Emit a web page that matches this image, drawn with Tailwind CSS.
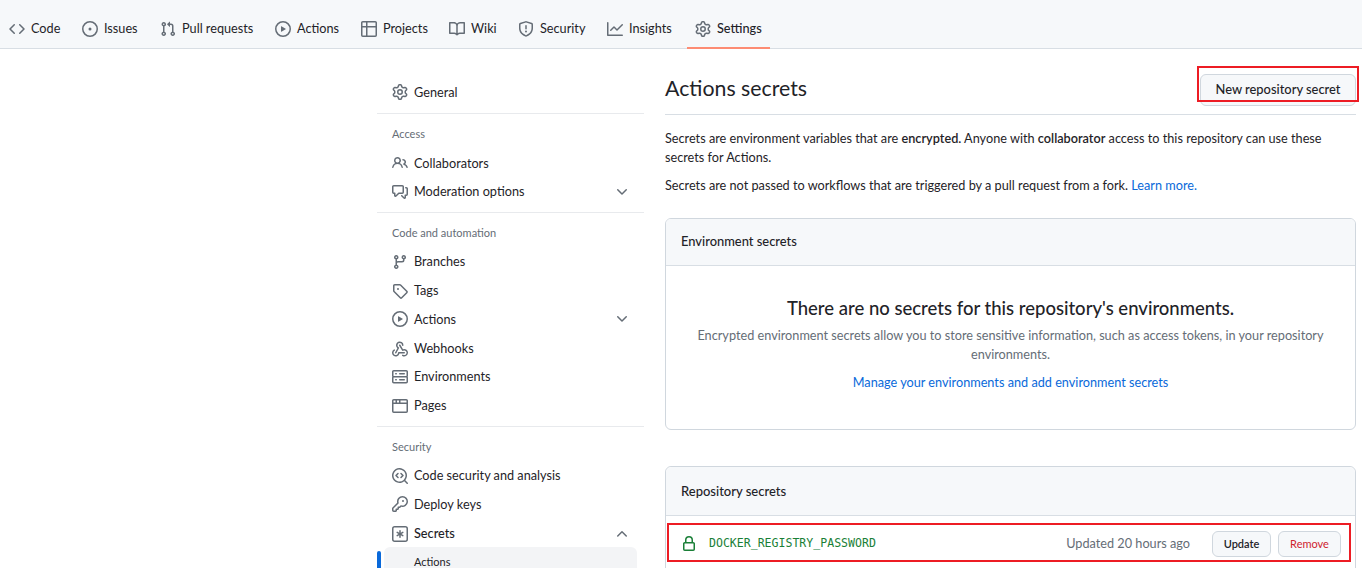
<!DOCTYPE html>
<html lang="en">
<head>
<meta charset="utf-8">
<title>Actions secrets</title>
<script src="https://cdn.jsdelivr.net/npm/@tailwindcss/browser@4"></script>
</head>
<body class="bg-white">
<div class="w-[1362px] h-[568px] overflow-hidden font-['Lato',sans-serif] text-[12.7px] text-[#1f2328]">
  <nav class="h-[49px] bg-[#f6f8fa] border-b border-[#d8dee4] flex pl-[1px] text-[12.7px]">
    <a class="w-[73px] h-[49px] flex items-center gap-[6px] pl-[8px] pt-[8px]"><svg class="w-4 h-4 fill-[#656d76] shrink-0" viewBox="0 0 16 16"><path d="m11.28 3.22 4.25 4.25a.75.75 0 0 1 0 1.06l-4.25 4.25a.749.749 0 0 1-1.275-.326.749.749 0 0 1 .215-.734L13.94 8l-3.72-3.72a.749.749 0 0 1 .326-1.275.749.749 0 0 1 .734.215Zm-6.56 0a.751.751 0 0 1 1.042.018.751.751 0 0 1 .018 1.042L2.06 8l3.72 3.72a.749.749 0 0 1-.326 1.275.749.749 0 0 1-.734-.215L.47 8.53a.75.75 0 0 1 0-1.06Z"/></svg>Code</a>
    <a class="w-[78px] h-[49px] flex items-center gap-[6px] pl-[8px] pt-[8px]"><svg class="w-4 h-4 fill-[#656d76] shrink-0" viewBox="0 0 16 16"><path d="M8 9.5a1.5 1.5 0 1 0 0-3 1.5 1.5 0 0 0 0 3Z"/><path d="M8 0a8 8 0 1 1 0 16A8 8 0 0 1 8 0ZM1.5 8a6.5 6.5 0 1 0 13 0 6.5 6.5 0 0 0-13 0Z"/></svg>Issues</a>
    <a class="w-[115px] h-[49px] flex items-center gap-[6px] pl-[8px] pt-[8px]"><svg class="w-4 h-4 fill-[#656d76] shrink-0" viewBox="0 0 16 16"><path d="M1.5 3.25a2.25 2.25 0 1 1 3 2.122v5.256a2.251 2.251 0 1 1-1.5 0V5.372A2.25 2.25 0 0 1 1.5 3.25Zm5.677-.177L9.573.677A.25.25 0 0 1 10 .854V2.5h1A2.5 2.5 0 0 1 13.5 5v5.628a2.251 2.251 0 1 1-1.5 0V5a1 1 0 0 0-1-1h-1v1.646a.25.25 0 0 1-.427.177L7.177 3.427a.25.25 0 0 1 0-.354ZM3.75 2.5a.75.75 0 1 0 0 1.5.75.75 0 0 0 0-1.5Zm0 9.5a.75.75 0 1 0 0 1.5.75.75 0 0 0 0-1.5Zm8.25.75a.75.75 0 1 0 1.5 0 .75.75 0 0 0-1.5 0Z"/></svg>Pull requests</a>
    <a class="w-[86px] h-[49px] flex items-center gap-[6px] pl-[8px] pt-[8px]"><svg class="w-4 h-4 fill-[#656d76] shrink-0" viewBox="0 0 16 16"><path d="M8 0a8 8 0 1 1 0 16A8 8 0 0 1 8 0ZM1.5 8a6.5 6.5 0 1 0 13 0 6.5 6.5 0 0 0-13 0Zm4.879-2.773 4.264 2.559a.25.25 0 0 1 0 .428l-4.264 2.559A.25.25 0 0 1 6 10.559V5.442a.25.25 0 0 1 .379-.215Z"/></svg>Actions</a>
    <a class="w-[88px] h-[49px] flex items-center gap-[6px] pl-[8px] pt-[8px]"><svg class="w-4 h-4 fill-[#656d76] shrink-0" viewBox="0 0 16 16"><path d="M0 1.75C0 .784.784 0 1.75 0h12.5C15.216 0 16 .784 16 1.75v12.5A1.75 1.75 0 0 1 14.25 16H1.75A1.75 1.75 0 0 1 0 14.25ZM6.5 6.5v8h7.75a.25.25 0 0 0 .25-.25V6.5Zm8-1.5V1.75a.25.25 0 0 0-.25-.25H6.5V5Zm-13 1.5v7.75c0 .138.112.25.25.25H5v-8ZM5 5V1.5H1.75a.25.25 0 0 0-.25.25V5Z"/></svg>Projects</a>
    <a class="w-[69px] h-[49px] flex items-center gap-[6px] pl-[8px] pt-[8px]"><svg class="w-4 h-4 fill-[#656d76] shrink-0" viewBox="0 0 16 16"><path d="M0 1.75A.75.75 0 0 1 .75 1h4.253c1.227 0 2.317.59 3 1.501A3.743 3.743 0 0 1 11.006 1h4.245a.75.75 0 0 1 .75.75v10.5a.75.75 0 0 1-.75.75h-4.507a2.25 2.25 0 0 0-1.591.659l-.622.621a.75.75 0 0 1-1.06 0l-.622-.621A2.25 2.25 0 0 0 5.258 13H.75a.75.75 0 0 1-.75-.75Zm7.251 10.324.004-5.073-.002-2.253A2.25 2.25 0 0 0 5.003 2.5H1.5v9h3.757a3.75 3.75 0 0 1 1.994.574ZM8.755 4.75l-.004 7.322a3.752 3.752 0 0 1 1.992-.572H14.5v-9h-3.495a2.25 2.25 0 0 0-2.25 2.25Z"/></svg>Wiki</a>
    <a class="w-[89px] h-[49px] flex items-center gap-[6px] pl-[8px] pt-[8px]"><svg class="w-4 h-4 fill-[#656d76] shrink-0" viewBox="0 0 16 16"><path d="M7.467.133a1.748 1.748 0 0 1 1.066 0l5.25 1.68A1.75 1.75 0 0 1 15 3.48V7c0 1.566-.32 3.182-1.303 4.682-.983 1.498-2.585 2.813-5.032 3.855a1.697 1.697 0 0 1-1.33 0c-2.447-1.042-4.049-2.357-5.032-3.855C1.32 10.182 1 8.566 1 7V3.48a1.75 1.75 0 0 1 1.217-1.667Zm.61 1.429a.25.25 0 0 0-.153 0l-5.25 1.68a.25.25 0 0 0-.174.238V7c0 1.358.275 2.666 1.057 3.86.784 1.194 2.121 2.34 4.366 3.297a.196.196 0 0 0 .154 0c2.245-.956 3.582-2.104 4.366-3.298C13.225 9.666 13.5 8.36 13.5 7V3.48a.251.251 0 0 0-.174-.237l-5.25-1.68ZM8.75 4.75v3a.75.75 0 0 1-1.5 0v-3a.75.75 0 0 1 1.5 0ZM9 10.5a1 1 0 1 1-2 0 1 1 0 0 1 2 0Z"/></svg>Security</a>
    <a class="w-[88px] h-[49px] flex items-center gap-[6px] pl-[8px] pt-[8px]"><svg class="w-4 h-4 fill-[#656d76] shrink-0" viewBox="0 0 16 16"><path d="M1.5 1.75V13.5h13.75a.75.75 0 0 1 0 1.5H.75a.75.75 0 0 1-.75-.75V1.75a.75.75 0 0 1 1.5 0Zm14.28 2.53-5.25 5.25a.75.75 0 0 1-1.06 0L7 7.06 4.28 9.78a.751.751 0 0 1-1.042-.018.751.751 0 0 1-.018-1.042l3.25-3.25a.75.75 0 0 1 1.06 0L10 7.94l4.72-4.72a.751.751 0 0 1 1.042.018.751.751 0 0 1 .018 1.042Z"/></svg>Insights</a>
    <a class="w-[83px] h-[49px] flex items-center gap-[6px] pl-[8px] pt-[10px] font-medium border-b-2 border-[#fd8c73]"><svg class="w-4 h-4 fill-[#656d76] shrink-0" viewBox="0 0 16 16"><path d="M8 0a8.2 8.2 0 0 1 .701.031C9.444.095 9.99.645 10.16 1.29l.288 1.107c.018.066.079.158.212.224.231.114.454.243.668.386.123.082.233.09.299.071l1.103-.303c.644-.176 1.392.021 1.82.63.27.385.506.792.704 1.218.315.675.111 1.422-.364 1.891l-.814.806c-.049.048-.098.147-.088.294.016.257.016.515 0 .772-.01.147.038.246.088.294l.814.806c.475.469.679 1.216.364 1.891a7.977 7.977 0 0 1-.704 1.217c-.428.61-1.176.807-1.82.63l-1.102-.302c-.067-.019-.177-.011-.3.071a5.909 5.909 0 0 1-.668.386c-.133.066-.194.158-.211.224l-.29 1.106c-.168.646-.715 1.196-1.458 1.26a8.006 8.006 0 0 1-1.402 0c-.743-.064-1.289-.614-1.458-1.26l-.289-1.106c-.018-.066-.079-.158-.212-.224a5.738 5.738 0 0 1-.668-.386c-.123-.082-.233-.09-.299-.071l-1.103.303c-.644.176-1.392-.021-1.82-.63a8.12 8.12 0 0 1-.704-1.218c-.315-.675-.111-1.422.363-1.891l.815-.806c.05-.048.098-.147.088-.294a6.214 6.214 0 0 1 0-.772c.01-.147-.038-.246-.088-.294l-.815-.806C.635 6.045.431 5.298.746 4.623a7.92 7.92 0 0 1 .704-1.217c.428-.61 1.176-.807 1.82-.63l1.102.302c.067.019.177.011.3-.071.214-.143.437-.272.668-.386.133-.066.194-.158.211-.224l.29-1.106C6.009.645 6.556.095 7.299.03 7.53.01 7.764 0 8 0Zm-.571 1.525c-.036.003-.108.036-.137.146l-.289 1.105c-.147.561-.549.967-.998 1.189-.173.086-.34.183-.5.29-.417.278-.97.423-1.529.27l-1.103-.303c-.109-.03-.175.016-.195.045-.22.312-.412.644-.573.99-.014.031-.021.11.059.19l.815.806c.411.406.562.957.53 1.456a4.709 4.709 0 0 0 0 .582c.032.499-.119 1.05-.53 1.456l-.815.806c-.081.08-.073.159-.059.19.162.346.353.677.573.989.02.03.085.076.195.046l1.102-.303c.56-.153 1.113-.008 1.53.27.161.107.328.204.501.29.447.222.85.629.997 1.189l.289 1.105c.029.109.101.143.137.146a6.6 6.6 0 0 0 1.142 0c.036-.003.108-.036.137-.146l.289-1.105c.147-.561.549-.967.998-1.189.173-.086.34-.183.5-.29.417-.278.97-.423 1.529-.27l1.103.303c.109.029.175-.016.195-.045.22-.313.411-.644.573-.99.014-.031.021-.11-.059-.19l-.815-.806c-.411-.406-.562-.957-.53-1.456a4.709 4.709 0 0 0 0-.582c-.032-.499.119-1.05.53-1.456l.815-.806c.081-.08.073-.159.059-.19a6.464 6.464 0 0 0-.573-.989c-.02-.03-.085-.076-.195-.046l-1.102.303c-.56.153-1.113.008-1.53-.27a4.44 4.44 0 0 0-.501-.29c-.447-.222-.85-.629-.997-1.189l-.289-1.105c-.029-.11-.101-.143-.137-.146a6.6 6.6 0 0 0-1.142 0ZM11 8a3 3 0 1 1-6 0 3 3 0 0 1 6 0ZM9.5 8a1.5 1.5 0 1 0-3.001.001A1.5 1.5 0 0 0 9.5 8Z"/></svg>Settings</a>
  </nav>

  <div class="flex pl-[377px]">
    <aside class="w-[267px] shrink-0 pt-[29px] text-[12.7px]">
      <a class="h-[28.8px] flex items-center gap-[6px] pl-[15px]"><svg class="w-4 h-4 fill-[#656d76] shrink-0" viewBox="0 0 16 16"><path d="M8 0a8.2 8.2 0 0 1 .701.031C9.444.095 9.99.645 10.16 1.29l.288 1.107c.018.066.079.158.212.224.231.114.454.243.668.386.123.082.233.09.299.071l1.103-.303c.644-.176 1.392.021 1.82.63.27.385.506.792.704 1.218.315.675.111 1.422-.364 1.891l-.814.806c-.049.048-.098.147-.088.294.016.257.016.515 0 .772-.01.147.038.246.088.294l.814.806c.475.469.679 1.216.364 1.891a7.977 7.977 0 0 1-.704 1.217c-.428.61-1.176.807-1.82.63l-1.102-.302c-.067-.019-.177-.011-.3.071a5.909 5.909 0 0 1-.668.386c-.133.066-.194.158-.211.224l-.29 1.106c-.168.646-.715 1.196-1.458 1.26a8.006 8.006 0 0 1-1.402 0c-.743-.064-1.289-.614-1.458-1.26l-.289-1.106c-.018-.066-.079-.158-.212-.224a5.738 5.738 0 0 1-.668-.386c-.123-.082-.233-.09-.299-.071l-1.103.303c-.644.176-1.392-.021-1.82-.63a8.12 8.12 0 0 1-.704-1.218c-.315-.675-.111-1.422.363-1.891l.815-.806c.05-.048.098-.147.088-.294a6.214 6.214 0 0 1 0-.772c.01-.147-.038-.246-.088-.294l-.815-.806C.635 6.045.431 5.298.746 4.623a7.92 7.92 0 0 1 .704-1.217c.428-.61 1.176-.807 1.82-.63l1.102.302c.067.019.177.011.3-.071.214-.143.437-.272.668-.386.133-.066.194-.158.211-.224l.29-1.106C6.009.645 6.556.095 7.299.03 7.53.01 7.764 0 8 0Zm-.571 1.525c-.036.003-.108.036-.137.146l-.289 1.105c-.147.561-.549.967-.998 1.189-.173.086-.34.183-.5.29-.417.278-.97.423-1.529.27l-1.103-.303c-.109-.03-.175.016-.195.045-.22.312-.412.644-.573.99-.014.031-.021.11.059.19l.815.806c.411.406.562.957.53 1.456a4.709 4.709 0 0 0 0 .582c.032.499-.119 1.05-.53 1.456l-.815.806c-.081.08-.073.159-.059.19.162.346.353.677.573.989.02.03.085.076.195.046l1.102-.303c.56-.153 1.113-.008 1.53.27.161.107.328.204.501.29.447.222.85.629.997 1.189l.289 1.105c.029.109.101.143.137.146a6.6 6.6 0 0 0 1.142 0c.036-.003.108-.036.137-.146l.289-1.105c.147-.561.549-.967.998-1.189.173-.086.34-.183.5-.29.417-.278.97-.423 1.529-.27l1.103.303c.109.029.175-.016.195-.045.22-.313.411-.644.573-.99.014-.031.021-.11-.059-.19l-.815-.806c-.411-.406-.562-.957-.53-1.456a4.709 4.709 0 0 0 0-.582c-.032-.499.119-1.05.53-1.456l.815-.806c.081-.08.073-.159.059-.19a6.464 6.464 0 0 0-.573-.989c-.02-.03-.085-.076-.195-.046l-1.102.303c-.56.153-1.113.008-1.53-.27a4.44 4.44 0 0 0-.501-.29c-.447-.222-.85-.629-.997-1.189l-.289-1.105c-.029-.11-.101-.143-.137-.146a6.6 6.6 0 0 0-1.142 0ZM11 8a3 3 0 1 1-6 0 3 3 0 0 1 6 0ZM9.5 8a1.5 1.5 0 1 0-3.001.001A1.5 1.5 0 0 0 9.5 8Z"/></svg>General</a>
      <div class="border-t border-[#e8eaed] mt-[6px]"></div>
      <div class="h-[14px] mt-[13px] mb-[8px] pl-[15px] text-[11px] leading-[14px] text-[#656d76]">Access</div>
      <a class="h-[28.8px] flex items-center gap-[6px] pl-[15px]"><svg class="w-4 h-4 fill-[#656d76] shrink-0" viewBox="0 0 16 16"><path d="M2 5.5a3.5 3.5 0 1 1 5.898 2.549 5.508 5.508 0 0 1 3.034 4.084.75.75 0 1 1-1.482.235 4 4 0 0 0-7.9 0 .75.75 0 0 1-1.482-.236A5.507 5.507 0 0 1 3.102 8.05 3.493 3.493 0 0 1 2 5.5ZM11 4a3.001 3.001 0 0 1 2.22 5.018 5.01 5.01 0 0 1 2.56 3.012.749.749 0 0 1-.885.954.752.752 0 0 1-.549-.514 3.507 3.507 0 0 0-2.522-2.372.75.75 0 0 1-.574-.73v-.352a.75.75 0 0 1 .416-.672A1.5 1.5 0 0 0 11 5.5.75.75 0 0 1 11 4Zm-5.5-.5a2 2 0 1 0-.001 3.999A2 2 0 0 0 5.5 3.5Z"/></svg>Collaborators</a>
      <a class="h-[28.8px] flex items-center gap-[6px] pl-[15px] pr-[14px]"><svg class="w-4 h-4 fill-[#656d76] shrink-0" viewBox="0 0 16 16"><path d="M1.75 1h8.5c.966 0 1.75.784 1.75 1.75v5.5A1.75 1.75 0 0 1 10.25 10H7.061l-2.574 2.573A1.458 1.458 0 0 1 2 11.543V10h-.25A1.75 1.75 0 0 1 0 8.25v-5.5C0 1.784.784 1 1.75 1ZM1.5 2.75v5.5c0 .138.112.25.25.25h1a.75.75 0 0 1 .75.75v2.19l2.72-2.72a.749.749 0 0 1 .53-.22h3.5a.25.25 0 0 0 .25-.25v-5.5a.25.25 0 0 0-.25-.25h-8.5a.25.25 0 0 0-.25.25Zm13 2a.25.25 0 0 0-.25-.25h-.5a.75.75 0 0 1 0-1.5h.5c.966 0 1.75.784 1.75 1.75v5.5A1.75 1.75 0 0 1 14.25 12H14v1.543a1.458 1.458 0 0 1-2.487 1.03L9.22 12.28a.749.749 0 0 1 .326-1.275.749.749 0 0 1 .734.215l2.22 2.22v-2.19a.75.75 0 0 1 .75-.75h1a.25.25 0 0 0 .25-.25Z"/></svg>Moderation options<svg class="w-4 h-4 fill-[#656d76] shrink-0 ml-auto" viewBox="0 0 16 16"><path d="M12.78 5.22a.749.749 0 0 1 0 1.06l-4.25 4.25a.749.749 0 0 1-1.06 0L3.22 6.28a.749.749 0 1 1 1.06-1.06L8 8.939l3.72-3.719a.749.749 0 0 1 1.06 0Z"/></svg></a>
      <div class="border-t border-[#e8eaed] mt-[6px]"></div>
      <div class="h-[14px] mt-[13px] mb-[7px] pl-[15px] text-[11px] leading-[14px] text-[#656d76]">Code and automation</div>
      <a class="h-[28.8px] flex items-center gap-[6px] pl-[15px]"><svg class="w-4 h-4 fill-[#656d76] shrink-0" viewBox="0 0 16 16"><path d="M9.5 3.25a2.25 2.25 0 1 1 3 2.122V6A2.5 2.5 0 0 1 10 8.5H6a1 1 0 0 0-1 1v1.128a2.251 2.251 0 1 1-1.5 0V5.372a2.25 2.25 0 1 1 1.5 0v1.836A2.493 2.493 0 0 1 6 7h4a1 1 0 0 0 1-1v-.628A2.25 2.25 0 0 1 9.5 3.25Zm-6 0a.75.75 0 1 0 1.5 0 .75.75 0 0 0-1.5 0Zm8.25-.75a.75.75 0 1 0 0 1.5.75.75 0 0 0 0-1.5ZM4.25 12a.75.75 0 1 0 0 1.5.75.75 0 0 0 0-1.5Z"/></svg>Branches</a>
      <a class="h-[28.8px] flex items-center gap-[6px] pl-[15px]"><svg class="w-4 h-4 fill-[#656d76] shrink-0" viewBox="0 0 16 16"><path d="M1 7.775V2.75C1 1.784 1.784 1 2.75 1h5.025c.464 0 .91.184 1.238.513l6.25 6.25a1.75 1.75 0 0 1 0 2.474l-5.026 5.026a1.75 1.75 0 0 1-2.474 0l-6.25-6.25A1.75 1.75 0 0 1 1 7.775Zm1.5 0c0 .066.026.13.073.177l6.25 6.25a.25.25 0 0 0 .354 0l5.025-5.025a.25.25 0 0 0 0-.354l-6.25-6.25a.25.25 0 0 0-.177-.073H2.75a.25.25 0 0 0-.25.25ZM6 5a1 1 0 1 1 0 2 1 1 0 0 1 0-2Z"/></svg>Tags</a>
      <a class="h-[28.8px] flex items-center gap-[6px] pl-[15px] pr-[14px]"><svg class="w-4 h-4 fill-[#656d76] shrink-0" viewBox="0 0 16 16"><path d="M8 0a8 8 0 1 1 0 16A8 8 0 0 1 8 0ZM1.5 8a6.5 6.5 0 1 0 13 0 6.5 6.5 0 0 0-13 0Zm4.879-2.773 4.264 2.559a.25.25 0 0 1 0 .428l-4.264 2.559A.25.25 0 0 1 6 10.559V5.442a.25.25 0 0 1 .379-.215Z"/></svg>Actions<svg class="w-4 h-4 fill-[#656d76] shrink-0 ml-auto" viewBox="0 0 16 16"><path d="M12.78 5.22a.749.749 0 0 1 0 1.06l-4.25 4.25a.749.749 0 0 1-1.06 0L3.22 6.28a.749.749 0 1 1 1.06-1.06L8 8.939l3.72-3.719a.749.749 0 0 1 1.06 0Z"/></svg></a>
      <a class="h-[28.8px] flex items-center gap-[6px] pl-[15px] pt-[1px]"><svg class="w-4 h-4 fill-[#656d76] shrink-0" viewBox="0 0 16 16"><path d="M5.5 4.25a2.25 2.25 0 0 1 4.5 0 .75.75 0 0 0 1.5 0 3.75 3.75 0 1 0-6.14 2.889l-2.272 4.258a.75.75 0 0 0 1.324.706L7 7.25a.75.75 0 0 0-.309-1.015A2.25 2.25 0 0 1 5.5 4.25Z"/><path d="M7.364 3.607a.75.75 0 0 1 1.03.257l2.608 4.349a3.75 3.75 0 1 1-.628 6.785.75.75 0 0 1 .752-1.299 2.25 2.25 0 1 0-.033-3.88.75.75 0 0 1-1.03-.256L7.107 4.636a.75.75 0 0 1 .257-1.03Z"/><path d="M2.9 8.776A.75.75 0 0 1 2.625 9.8 2.25 2.25 0 1 0 6 11.75a.75.75 0 0 1 .75-.751h5.5a.75.75 0 0 1 0 1.5H7.425a3.751 3.751 0 1 1-5.55-3.998.75.75 0 0 1 1.024.274Z"/></svg>Webhooks</a>
      <a class="h-[28.8px] flex items-center gap-[6px] pl-[15px]"><svg class="w-4 h-4 fill-[#656d76] shrink-0" viewBox="0 0 16 16"><path d="M1.75 1h12.5c.966 0 1.75.784 1.75 1.75v4c0 .372-.116.717-.314 1 .198.283.314.628.314 1v4a1.75 1.75 0 0 1-1.75 1.75H1.75A1.75 1.75 0 0 1 0 12.75v-4c0-.358.109-.707.314-1a1.739 1.739 0 0 1-.314-1v-4C0 1.784.784 1 1.75 1ZM1.5 2.75v4c0 .138.112.25.25.25h12.5a.25.25 0 0 0 .25-.25v-4a.25.25 0 0 0-.25-.25H1.75a.25.25 0 0 0-.25.25Zm.25 5.75a.25.25 0 0 0-.25.25v4c0 .138.112.25.25.25h12.5a.25.25 0 0 0 .25-.25v-4a.25.25 0 0 0-.25-.25ZM7 4.75A.75.75 0 0 1 7.75 4h4.5a.75.75 0 0 1 0 1.5h-4.5A.75.75 0 0 1 7 4.75Zm.75 5.25h4.5a.75.75 0 0 1 0 1.5h-4.5a.75.75 0 0 1 0-1.5ZM3 4.75A.75.75 0 0 1 3.75 4h.5a.75.75 0 0 1 0 1.5h-.5A.75.75 0 0 1 3 4.75ZM3.75 10h.5a.75.75 0 0 1 0 1.5h-.5a.75.75 0 0 1 0-1.5Z"/></svg>Environments</a>
      <a class="h-[28.8px] flex items-center gap-[6px] pl-[15px]"><svg class="w-4 h-4 fill-[#656d76] shrink-0" viewBox="0 0 16 16"><path d="M0 2.75C0 1.784.784 1 1.75 1h12.5c.966 0 1.75.784 1.75 1.75v10.5A1.75 1.75 0 0 1 14.25 15H1.75A1.75 1.75 0 0 1 0 13.25ZM14.5 6h-13v7.25c0 .138.112.25.25.25h12.5a.25.25 0 0 0 .25-.25Zm-6-3.5v2h6V2.75a.25.25 0 0 0-.25-.25ZM5 2.5v2h2v-2Zm-3.25 0a.25.25 0 0 0-.25.25V4.5h2v-2Z"/></svg>Pages</a>
      <div class="border-t border-[#e8eaed] mt-[6px]"></div>
      <div class="h-[14px] mt-[13px] mb-[7px] pl-[15px] text-[11px] leading-[14px] text-[#656d76]">Security</div>
      <a class="h-[28.8px] flex items-center gap-[6px] pl-[15px]"><svg class="w-4 h-4 fill-[#656d76] shrink-0" viewBox="0 0 16 16"><path d="M8.47 4.97a.75.75 0 0 0 0 1.06L9.94 7.5 8.47 8.97a.75.75 0 1 0 1.06 1.06l2-2a.75.75 0 0 0 0-1.06l-2-2a.75.75 0 0 0-1.06 0ZM6.53 6.03a.75.75 0 0 0-1.06-1.06l-2 2a.75.75 0 0 0 0 1.06l2 2a.75.75 0 1 0 1.06-1.06L5.06 7.5l1.47-1.47Z"/><path d="M12.246 13.307a7.501 7.501 0 1 1 1.06-1.06l2.474 2.473a.749.749 0 0 1-.326 1.275.749.749 0 0 1-.734-.215ZM1.5 7.5a6.002 6.002 0 0 0 3.608 5.504 6.002 6.002 0 0 0 6.486-1.117.748.748 0 0 1 .292-.293A6 6 0 1 0 1.5 7.5Z"/></svg>Code security and analysis</a>
      <a class="h-[28.8px] flex items-center gap-[6px] pl-[15px]"><svg class="w-4 h-4 fill-[#656d76] shrink-0" viewBox="0 0 16 16"><path d="M10.5 0a5.499 5.499 0 1 1-1.288 10.848l-.932.932a.749.749 0 0 1-.53.22H7v.75a.749.749 0 0 1-.22.53l-.5.5a.749.749 0 0 1-.53.22H5v.75a.749.749 0 0 1-.22.53l-.5.5a.749.749 0 0 1-.53.22h-2A1.75 1.75 0 0 1 0 14.25v-2c0-.199.079-.389.22-.53l4.932-4.932A5.5 5.5 0 0 1 10.5 0Zm-4 5.5c-.001.431.069.86.205 1.269a.75.75 0 0 1-.181.768L1.5 12.56v1.69c0 .138.112.25.25.25h1.69l.06-.06v-1.19a.75.75 0 0 1 .75-.75h1.19l.06-.06v-1.19a.75.75 0 0 1 .75-.75h1.19l1.023-1.025a.75.75 0 0 1 .768-.18A4 4 0 1 0 6.5 5.5ZM11 6a1 1 0 1 1 0-2 1 1 0 0 1 0 2Z"/></svg>Deploy keys</a>
      <a class="h-[28.8px] flex items-center gap-[6px] pl-[15px] pr-[14px] pt-[1px] font-medium"><svg class="w-4 h-4 fill-[#656d76] shrink-0" viewBox="0 0 16 16"><path d="M0 2.75A2.75 2.75 0 0 1 2.75 0h10.5A2.75 2.75 0 0 1 16 2.75v10.5A2.75 2.75 0 0 1 13.25 16H2.75A2.75 2.75 0 0 1 0 13.25ZM2.75 1.5c-.69 0-1.25.56-1.25 1.25v10.5c0 .69.56 1.25 1.25 1.25h10.5c.69 0 1.25-.56 1.25-1.25V2.75c0-.69-.56-1.25-1.25-1.25Z"/><path d="M8 4a.75.75 0 0 1 .75.75V6.7l1.69-.975a.75.75 0 0 1 .75 1.3L9.5 8l1.69.976a.75.75 0 0 1-.75 1.298L8.75 9.3v1.951a.75.75 0 0 1-1.5 0V9.299l-1.69.976a.75.75 0 0 1-.75-1.3L6.5 8l-1.69-.975a.75.75 0 0 1 .75-1.3l1.69.976V4.75A.75.75 0 0 1 8 4Z"/></svg>Secrets<svg class="w-4 h-4 fill-[#656d76] shrink-0 ml-auto" viewBox="0 0 16 16"><path d="M3.22 10.53a.749.749 0 0 1 0-1.06l4.25-4.25a.749.749 0 0 1 1.06 0l4.25 4.25a.749.749 0 1 1-1.06 1.06L8 6.811 4.28 10.53a.749.749 0 0 1-1.06 0Z"/></svg></a>
      <div class="relative h-[30px] -mt-[1px] ml-[7px] mr-[7px] rounded-t-md bg-[#f3f4f6] flex items-start pl-[30px] pt-[8px] text-[11px] leading-[14px]">
        <span class="absolute left-[-7px] top-[4px] w-[4px] h-[26px] rounded-t-md bg-[#0969da]"></span>Actions
      </div>
    </aside>

    <main class="w-[691px] ml-[21px] shrink-0">
      <div class="relative h-[66px] border-b border-[#d8dee4] flex items-start justify-between pt-[22px]">
        <h1 class="text-[21.3px] leading-[34px] font-normal">Actions secrets</h1>
        <button class="mt-[3px] w-[156px] h-[32px] rounded-md border border-[#d0d7de] bg-[#f6f8fa] text-[12.9px] font-medium text-center">New repository secret</button>
        <span class="absolute left-[532px] top-[17px] w-[162px] h-[36px] border-2 border-[#ed1c24]"></span>
      </div>
      <p class="mt-[14px] leading-[19px] text-[12.7px] w-[670px]">Secrets are environment variables that are <b class="font-semibold">encrypted.</b> Anyone with <b class="font-semibold">collaborator</b> access to this repository can use these secrets for Actions.</p>
      <p class="mt-[9px] leading-[19px] text-[12.7px]">Secrets are not passed to workflows that are triggered by a pull request from a fork. <a class="text-[#0969da]">Learn more.</a></p>

      <section class="mt-[23px] h-[212px] rounded-md border border-[#d0d7de] overflow-hidden">
        <div class="h-[47px] bg-[#f6f8fa] border-b border-[#d8dee4] flex items-center pl-[15px] text-[12.9px] font-medium">Environment secrets</div>
        <div class="flex flex-col items-center text-center pt-[28px]">
          <h3 class="text-[18.5px] leading-[28px] font-medium">There are no secrets for this repository's environments.</h3>
          <p class="mt-[4px] w-[660px] text-[12.7px] leading-[19px] text-[#656d76]">Encrypted environment secrets allow you to store sensitive information, such as access tokens, in your repository environments.</p>
          <a class="mt-[9px] text-[12.7px] leading-[19px] text-[#0969da]">Manage your environments and add environment secrets</a>
        </div>
      </section>

      <section class="mt-[36px] rounded-t-md border border-[#d0d7de] relative h-[200px]">
        <div class="h-[49px] pt-[1px] bg-[#f6f8fa] rounded-t-md border-b border-[#d8dee4] flex items-center pl-[15px] text-[13px] font-medium">Repository secrets</div>
        <div class="h-[56px] flex items-center pl-[15px] pr-[14px]">
          <svg class="w-4 h-4 fill-[#1a7f37] shrink-0" viewBox="0 0 16 16"><path d="M4 4a4 4 0 0 1 8 0v2h.25c.966 0 1.75.784 1.75 1.75v5.5A1.75 1.75 0 0 1 12.25 15h-8.5A1.75 1.75 0 0 1 2 13.25v-5.5C2 6.784 2.784 6 3.75 6H4Zm8.25 3.5h-8.5a.25.25 0 0 0-.25.25v5.5c0 .138.112.25.25.25h8.5a.25.25 0 0 0 .25-.25v-5.5a.25.25 0 0 0-.25-.25ZM10.5 6V4a2.5 2.5 0 1 0-5 0v2Z"/></svg>
          <code class="ml-[12px] font-['DejaVu_Sans_Mono',monospace] text-[11.55px] text-[#1a7f37]">DOCKER_REGISTRY_PASSWORD</code>
          <span class="ml-auto text-[12.7px] text-[#656d76]">Updated 20 hours ago</span>
          <button class="ml-[22px] w-[59px] h-[26px] rounded-md border border-[#d0d7de] bg-[#f6f8fa] text-[11px] font-semibold">Update</button>
          <button class="ml-[7px] w-[63px] h-[26px] rounded-md border border-[#d0d7de] bg-[#f6f8fa] text-[11px] text-[#cf222e]">Remove</button>
        </div>
        <span class="absolute left-[1px] top-[56px] w-[684px] h-[39px] border-2 border-[#ed1c24]"></span>
      </section>
    </main>
  </div>
</div>
</body>
</html>
